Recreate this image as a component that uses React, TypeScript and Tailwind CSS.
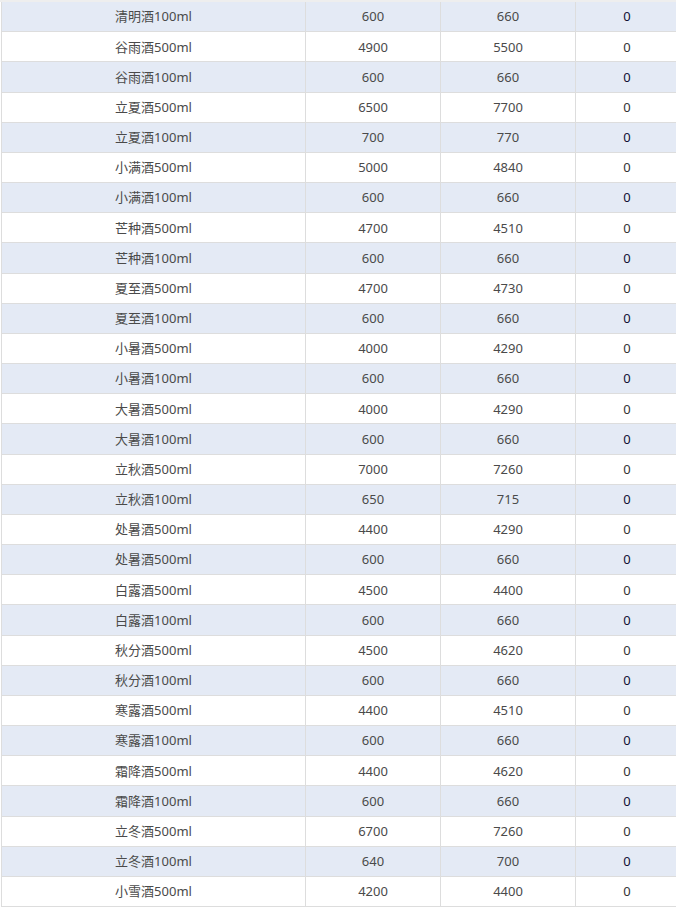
import React from "react";

const rows: [string, number, number, number][] = [
  ["清明酒100ml", 600, 660, 0],
  ["谷雨酒500ml", 4900, 5500, 0],
  ["谷雨酒100ml", 600, 660, 0],
  ["立夏酒500ml", 6500, 7700, 0],
  ["立夏酒100ml", 700, 770, 0],
  ["小满酒500ml", 5000, 4840, 0],
  ["小满酒100ml", 600, 660, 0],
  ["芒种酒500ml", 4700, 4510, 0],
  ["芒种酒100ml", 600, 660, 0],
  ["夏至酒500ml", 4700, 4730, 0],
  ["夏至酒100ml", 600, 660, 0],
  ["小暑酒500ml", 4000, 4290, 0],
  ["小暑酒100ml", 600, 660, 0],
  ["大暑酒500ml", 4000, 4290, 0],
  ["大暑酒100ml", 600, 660, 0],
  ["立秋酒500ml", 7000, 7260, 0],
  ["立秋酒100ml", 650, 715, 0],
  ["处暑酒500ml", 4400, 4290, 0],
  ["处暑酒500ml", 600, 660, 0],
  ["白露酒500ml", 4500, 4400, 0],
  ["白露酒100ml", 600, 660, 0],
  ["秋分酒500ml", 4500, 4620, 0],
  ["秋分酒100ml", 600, 660, 0],
  ["寒露酒500ml", 4400, 4510, 0],
  ["寒露酒100ml", 600, 660, 0],
  ["霜降酒500ml", 4400, 4620, 0],
  ["霜降酒100ml", 600, 660, 0],
  ["立冬酒500ml", 6700, 7260, 0],
  ["立冬酒100ml", 640, 700, 0],
  ["小雪酒500ml", 4200, 4400, 0],
];

const App = () => {
  return (
    <div
      className="w-[676px] h-[908px] overflow-hidden bg-white text-[13px]"
      style={{ fontFamily: '"Noto Sans", "Noto Sans CJK SC", sans-serif' }}
    >
      <div className="h-[2px] bg-[#eeeeee]" />
      {/* table body */}
      <div className="ml-[1px] w-[678px] border-l border-[#dddddd]">
        {rows.map((r, i) => (
          <div
            key={i}
            className={`grid grid-cols-[304px_135px_135px_1fr] h-[30.18px] border-b border-[#dddddd] ${
              i % 2 === 0 ? "bg-[#e4eaf5]" : "bg-white"
            }`}
          >
            <div className="flex items-center justify-center pt-px border-r border-[#dddddd] text-[#4a4a4a]">
              {r[0]}
            </div>
            <div className="flex items-center justify-center pt-px border-r border-[#dddddd] text-[#4a4a4a]">
              {r[1]}
            </div>
            <div className="flex items-center justify-center pt-px border-r border-[#dddddd] text-[#4a4a4a]">
              {r[2]}
            </div>
            <div
              className={`flex items-center justify-center pt-px border-r border-[#dddddd] ${
                i % 2 === 0 ? "text-[#111133]" : "text-[#333333]"
              }`}
            >
              {r[3]}
            </div>
          </div>
        ))}
      </div>
    </div>
  );
};

export default App;
